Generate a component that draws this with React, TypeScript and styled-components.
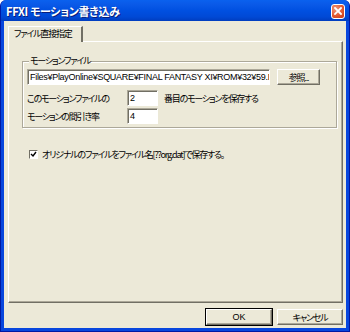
import React from 'react';
import styled, { createGlobalStyle } from 'styled-components';

const GlobalStyle = createGlobalStyle`
  html, body {
    margin: 0;
    padding: 0;
    background: #ffffff;
  }
  body {
    font-family: "Noto Sans CJK JP", "Liberation Sans", sans-serif;
    font-size: 9px;
    color: #000;
  }
`;

const Window = styled.div`
  width: 350px;
  height: 332px;
  box-sizing: border-box;
  display: flex;
  flex-direction: column;
  background: #0846dd;
  border: 1px solid #0019a3;
  border-top: none;
  border-radius: 6px 6px 0 0;
  overflow: hidden;
`;

const TitleBar = styled.div`
  height: 21px;
  flex: none;
  display: flex;
  align-items: center;
  justify-content: space-between;
  padding: 0 4px 0 5px;
  background: linear-gradient(#0a61ee 0%, #0a5ae8 20%, #0050e1 50%, #0049d6 80%, #003dbf 100%);
`;

const Title = styled.div`
  color: #fff;
  font-weight: bold;
  font-size: 11px;
  letter-spacing: -0.3px;
  text-shadow: 1px 1px 0 #0a1e7a;
  font-feature-settings: 'palt';
`;

const CloseButton = styled.div`
  width: 14px;
  height: 15px;
  box-sizing: border-box;
  border: 1px solid #fff;
  border-radius: 3px;
  background: radial-gradient(circle at 30% 30%, #f0957a, #e0552c 60%, #c3381a);
  display: flex;
  align-items: center;
  justify-content: center;
  margin-top: 1px;
`;

const Body = styled.div`
  flex: 1;
  margin: 0 3px 3px 3px;
  background: #ece9d8;
  display: flex;
  flex-direction: column;
  padding: 5px 3px 3px 4px;
`;

const TabStrip = styled.div`
  display: flex;
  height: 15px;
  flex: none;
`;

const Tab = styled.div`
  box-sizing: border-box;
  width: 75px;
  height: 16px;
  padding: 0 0 0 5px;
  border-top: 1px solid #fff;
  border-left: 1px solid #fff;
  border-right: 2px solid #716f64;
  background: #ece9d8;
  line-height: 14px;
  position: relative;
  z-index: 1;
`;

const TabPanel = styled.div`
  flex: 1;
  box-sizing: border-box;
  border-top: 1px solid #fff;
  border-left: 1px solid #fff;
  border-right: 1px solid #716f64;
  border-bottom: 1px solid #716f64;
  box-shadow: inset -1px -1px 0 #aca899;
  padding: 13px 5px 0 13px;
`;

const Group = styled.fieldset`
  margin: 0;
  padding: 2px 16px 3px 4px;
  border: 1px solid #aca899;
  box-shadow: inset 1px 1px 0 #fff, 1px 1px 0 #fff;
  display: grid;
  grid-template-columns: 100px 31px 1fr;
  row-gap: 2px;
  align-items: center;
`;

const Jp = styled.span`
  font-size: 9px;
  letter-spacing: -1.2px;
  font-feature-settings: 'palt';
  white-space: nowrap;
`;

const Legend = styled.legend`
  padding: 0 1px;
  margin-left: 2px;
  background: #ece9d8;
  line-height: 12px;
`;

const PathRow = styled.div`
  grid-column: 1 / 4;
  display: flex;
  gap: 7px;
  margin-bottom: 3px;
`;

const Field = styled.div<{ $width?: number }>`
  box-sizing: border-box;
  height: 16px;
  width: ${(p) => (p.$width ? `${p.$width}px` : 'auto')};
  flex: ${(p) => (p.$width ? 'none' : '1')};
  background: #fff;
  border-top: 1px solid #aca899;
  border-left: 1px solid #aca899;
  border-right: 1px solid #fff;
  border-bottom: 1px solid #fff;
  box-shadow: inset 1px 1px 0 #716f64;
  padding: 0 2px;
  font-family: "Liberation Sans", "Noto Sans CJK JP", sans-serif;
  font-size: 9px;
  letter-spacing: -0.3px;
  line-height: 15px;
  white-space: nowrap;
  overflow: hidden;
`;

const Label = styled.div<{ $indent?: number }>`
  padding-left: ${(p) => p.$indent ?? 0}px;
  white-space: nowrap;
`;

const Button = styled.div<{ $default?: boolean; $width?: number }>`
  box-sizing: border-box;
  width: ${(p) => p.$width ?? 66}px;
  height: 16px;
  flex: none;
  background: #ece9d8;
  border-top: 1px solid #fff;
  border-left: 1px solid #fff;
  border-right: 1px solid #716f64;
  border-bottom: 1px solid #716f64;
  box-shadow: inset -1px -1px 0 #aca899${(p) => (p.$default ? ', 0 0 0 1px #000' : '')};
  display: flex;
  align-items: center;
  justify-content: center;
  font-family: "Liberation Sans", "Noto Sans CJK JP", sans-serif;
  font-size: 9px;
`;

const CheckRow = styled.label`
  display: flex;
  align-items: center;
  gap: 4px;
  margin: 20px 0 0 7px;
`;

const CheckBox = styled.div`
  width: 9px;
  height: 9px;
  box-sizing: border-box;
  background: #fff;
  border-top: 1px solid #716f64;
  border-left: 1px solid #716f64;
  border-right: 1px solid #fff;
  border-bottom: 1px solid #fff;
  display: flex;
  align-items: center;
  justify-content: center;
`;

const Footer = styled.div`
  display: flex;
  justify-content: flex-end;
  gap: 5px;
  padding: 6px 0 0 0;
  height: 22px;
  flex: none;
  box-sizing: border-box;
`;

export default function App() {
  return (
    <>
      <GlobalStyle />
      <Window>
        <TitleBar>
          <Title>FFXI モーション書き込み</Title>
          <CloseButton>
            <svg width="8" height="8" viewBox="0 0 8 8">
              <path d="M1 1 L7 7 M7 1 L1 7" stroke="#fff" strokeWidth="1.8" strokeLinecap="square" />
            </svg>
          </CloseButton>
        </TitleBar>
        <Body>
          <TabStrip>
            <Tab><Jp>ファイル直接指定</Jp></Tab>
          </TabStrip>
          <TabPanel>
            <Group>
              <Legend><Jp>モーションファイル</Jp></Legend>
              <PathRow>
                <Field>Files¥PlayOnline¥SQUARE¥FINAL FANTASY XI¥ROM¥32¥59.DAT</Field>
                <Button $width={43}><Jp>参照...</Jp></Button>
              </PathRow>
              <Label><Jp>このモーションファイルの</Jp></Label>
              <Field $width={31}>2</Field>
              <Label $indent={6}><Jp>番目のモーションを保存する</Jp></Label>
              <Label><Jp>モーションの間引き率</Jp></Label>
              <Field $width={31}>4</Field>
              <div />
            </Group>
            <CheckRow>
              <CheckBox>
                <svg width="7" height="7" viewBox="0 0 7 7">
                  <path d="M1 3 L3 5 L6 1" stroke="#000" strokeWidth="1.4" fill="none" />
                </svg>
              </CheckBox>
              <Jp>オリジナルのファイルをファイル名[??org.dat]で保存する。</Jp>
            </CheckRow>
          </TabPanel>
          <Footer>
            <Button $default>OK</Button>
            <Button><Jp>キャンセル</Jp></Button>
          </Footer>
        </Body>
      </Window>
    </>
  );
}
